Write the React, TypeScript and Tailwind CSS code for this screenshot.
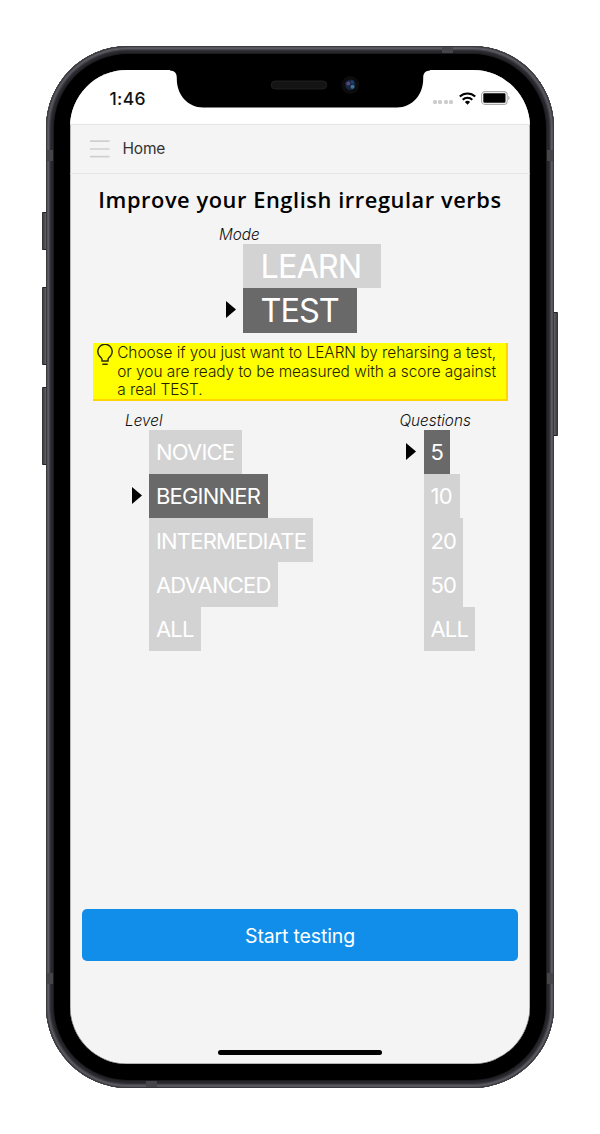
import React from "react";

type Option = { label: string; width: string; selected?: boolean };

const modes: Option[] = [
  { label: "LEARN", width: "w-[138px]" },
  { label: "TEST", width: "w-[113.5px]", selected: true },
];

const levels: Option[] = [
  { label: "NOVICE", width: "w-[92.4px]" },
  { label: "BEGINNER", width: "w-[118.4px]", selected: true },
  { label: "INTERMEDIATE", width: "w-[163.4px]" },
  { label: "ADVANCED", width: "w-[128.4px]" },
  { label: "ALL", width: "w-[51.4px]" },
];

const questions: Option[] = [
  { label: "5", width: "w-[26.4px]", selected: true },
  { label: "10", width: "w-[36.4px]" },
  { label: "20", width: "w-[39.4px]" },
  { label: "50", width: "w-[39.8px]" },
  { label: "ALL", width: "w-[51.4px]" },
];

function OptionList({ options, large }: { options: Option[]; large?: boolean }) {
  return (
    <ul>
      {options.map((o) => (
        <li key={o.label} className="flex h-[44.25px] items-center">
          <span className="w-[17.5px] shrink-0">
            {o.selected && (
              <svg width="10" height="17" viewBox="0 0 10 17" className="-mt-px block">
                <path d="M0 0 L10 8.5 L0 17 Z" fill="#000" />
              </svg>
            )}
          </span>
          <button
            className={`flex h-full items-center whitespace-nowrap pt-[2px] text-white ${o.width} ${
              o.selected ? "bg-[#696969]" : "bg-[#d3d3d3]"
            } ${large ? "pl-[17.5px] text-[32.5px] tracking-[-1px]" : "pl-[6.8px] text-[22px] tracking-[-0.8px]"}`}
          >
            {o.label}
          </button>
        </li>
      ))}
    </ul>
  );
}

function Label({ children }: { children: string }) {
  return (
    <h2 className="h-[20px] text-[15.3px] font-light italic leading-[22px] text-[#111]">
      {children}
    </h2>
  );
}

function StatusBar() {
  return (
    <div className="flex h-[54px] shrink-0 items-start justify-between bg-white pl-[39.5px] pr-[19.5px] pt-[18px]">
      <span className="text-[17.5px] font-medium leading-[22px] tracking-[0.3px] text-[#111]">1:46</span>
      <div className="flex items-center pt-[3px]">
        <div className="mr-[6px] mt-[8px] flex gap-[1.5px]">
          {[0, 1, 2, 3].map((i) => (
            <i key={i} className="block size-[4px] rounded-[1.5px] bg-[#cdcdcd]" />
          ))}
        </div>
        <svg width="17" height="13" viewBox="0 0 17 13" className="mr-[5.5px] block">
          <g fill="none" stroke="#000" strokeWidth="2.1">
            <path d="M0.8 4.6 A11 11 0 0 1 16.2 4.6" />
            <path d="M3.7 7.7 A6.8 6.8 0 0 1 13.3 7.7" />
          </g>
          <path d="M8.5 12.7 L5.9 10.1 A3.7 3.7 0 0 1 11.1 10.1 Z" fill="#000" />
        </svg>
        <svg width="29" height="14" viewBox="0 0 29 14" className="-ml-px mr-px block">
          <rect x="0.6" y="0.6" width="25.6" height="12.8" rx="3.4" fill="none" stroke="#aaa" strokeWidth="1.1" />
          <rect x="2.3" y="2.3" width="22.2" height="9.4" rx="1.2" fill="#000" />
          <path d="M27.4 4.8 A2.7 2.7 0 0 1 27.4 9.2 Z" fill="#999" />
        </svg>
      </div>
    </div>
  );
}

function Bulb() {
  return (
    <svg
      width="18"
      height="22"
      viewBox="0 0 18 22"
      className="ml-[1px] mt-[1px] block shrink-0"
      fill="none"
      stroke="#2e2e00"
      strokeWidth="1.5"
      strokeLinecap="round"
    >
      <path d="M6 17 V15.6 C6 14.2 4.8 13.4 3.5 12.1 A7.2 7.2 0 1 1 14.5 12.1 C13.2 13.4 12 14.2 12 15.6 V17 Z" />
      <path d="M6.8 20.3 H11.2" />
    </svg>
  );
}

function Hardware() {
  return (
    <>
      <div className="absolute left-[-4px] top-[166px] h-[38px] w-[4px] rounded-l-[1px] border-y border-[#222226] bg-linear-to-r from-[#303034] to-[#626168]" />
      <div className="absolute left-[-4px] top-[241px] h-[78px] w-[4px] rounded-l-[1px] border-y border-[#222226] bg-linear-to-r from-[#303034] to-[#626168]" />
      <div className="absolute left-[-4px] top-[341px] h-[78px] w-[4px] rounded-l-[1px] border-y border-[#222226] bg-linear-to-r from-[#303034] to-[#626168]" />
      <div className="absolute right-[-4px] top-[266px] h-[124px] w-[4px] rounded-r-[1px] border-y border-[#222226] bg-linear-to-l from-[#303034] to-[#626168]" />
      <div className="absolute left-[1px] top-[104px] h-[11px] w-[6px] bg-[#45454a]" />
      <div className="absolute right-[1px] top-[104px] h-[11px] w-[6px] bg-[#45454a]" />
      <div className="absolute left-[1px] top-[927px] h-[11px] w-[6px] bg-[#45454a]" />
      <div className="absolute right-[1px] top-[927px] h-[11px] w-[6px] bg-[#45454a]" />
      <div className="absolute right-[101px] top-[1px] h-[6px] w-[11px] bg-[#45454a]" />
      <div className="absolute bottom-[1px] left-[100px] h-[6px] w-[11px] bg-[#45454a]" />
    </>
  );
}

function Notch() {
  return (
    <svg width="264" height="40" viewBox="0 0 264 40" className="absolute left-[122px] top-[22.5px]">
      <path
        d="M2 0 H262 V1.6 C258 1.8 255.2 3.5 255.2 9 V10 C255.2 26 244 38.5 229 38.5 H35 C20 38.5 8.8 26 8.8 10 V9 C8.8 3.5 6 1.8 2 1.6 Z"
        fill="#000"
      />
      <rect x="103.2" y="12" width="55.6" height="8" rx="4" fill="#141414" stroke="#242424" strokeWidth="0.8" />
      <circle cx="182.3" cy="16" r="9" fill="#0c0c0e" />
      <circle cx="182.3" cy="15.8" r="5.2" fill="#16263f" />
      <circle cx="180.3" cy="14.6" r="2" fill="#554581" />
      <circle cx="184.5" cy="17.8" r="2" fill="#3f7393" />
      <circle cx="184.3" cy="13" r="1.7" fill="#1c4272" />
    </svg>
  );
}

export default function App() {
  return (
    <main className="flex h-[1134px] w-[600px] justify-center bg-white pt-[46px] font-['Inter',sans-serif]">
      <div className="relative h-[1042px] w-[508px] rounded-[82px] bg-black p-[24px] shadow-[inset_0_0_0_1px_#3a3a3e,inset_0_0_0_2px_#55545b,inset_0_0_0_3px_#5c5b62,inset_0_0_0_4px_#45444a,inset_0_0_0_5px_#333238,inset_0_0_0_7px_#27262b,inset_0_0_0_8px_#1b1b1e]">
        <Hardware />
        <div className="flex h-full flex-col overflow-hidden rounded-[57px] bg-[#f4f4f4] shadow-[inset_0_0_0_0.5px_#777]">
          <StatusBar />
          <header className="flex h-[50px] shrink-0 items-center border-y border-[#e5e5e5] pl-[19.5px]">
            <svg width="20" height="18" viewBox="0 0 20 18" className="mr-[13px] block">
              <path d="M0 1.2 H19.5 M0 9 H19.5 M0 16.6 H19.5" stroke="#cfcfcf" strokeWidth="1.7" />
            </svg>
            <span className="text-[15.5px] leading-5 tracking-[-0.2px] text-[#333]">Home</span>
          </header>

          <h1 className="mt-[9px] h-[34px] whitespace-nowrap text-center font-['Open_Sans',sans-serif] text-[21.8px] font-semibold leading-[34px] tracking-[0.57px] text-black">
            Improve your English irregular verbs
          </h1>

          <section className="pl-[149px] pt-[7px]">
            <Label>Mode</Label>
            <div className="pl-[6.5px]">
              <OptionList options={modes} large />
            </div>
          </section>

          <aside className="ml-[23px] mt-[10.5px] flex h-[57.5px] w-[414.5px] shrink-0 border-b-2 border-r-2 border-[#ffd500] bg-[#ff0] pl-[2px]">
            <Bulb />
            <p className="ml-[3.2px] whitespace-nowrap pt-px text-[15.4px] font-light leading-[18.5px] tracking-[-0.03px] text-[#222200]">
              Choose if you just want to LEARN by reharsing a test,
              <br />
              or you are ready to be measured with a score against
              <br />a real TEST.
            </p>
          </aside>

          <div className="flex pt-[9px]">
            <section className="w-[274.5px] pl-[55px]">
              <Label>Level</Label>
              <div className="pl-[6.7px]">
                <OptionList options={levels} />
              </div>
            </section>
            <section className="pl-[55px]">
              <Label>Questions</Label>
              <div className="pl-[6.7px]">
                <OptionList options={questions} />
              </div>
            </section>
          </div>

          <div className="mt-auto px-[11.7px]">
            <button className="block h-[52px] w-full rounded-[5px] bg-[#118eea] pt-[3px] text-[19.5px] tracking-[-0.15px] text-white">
              Start testing
            </button>
          </div>
          <div className="mb-[9px] flex h-[94px] shrink-0 items-end justify-center">
            <div className="h-[5px] w-[164px] rounded-full bg-black" />
          </div>
        </div>
        <Notch />
      </div>
    </main>
  );
}
